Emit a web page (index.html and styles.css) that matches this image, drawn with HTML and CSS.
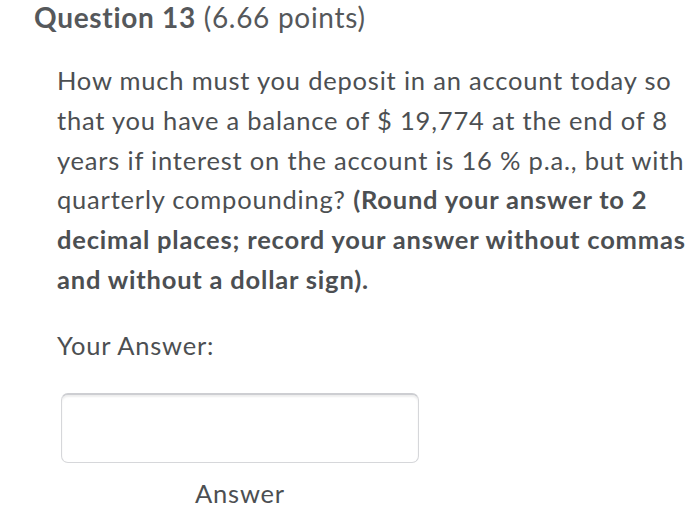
FILE: index.html
```html
<!DOCTYPE html>
<html>
<head>
<meta charset="utf-8">
<link rel="stylesheet" href="styles.css">
</head>
<body>
<div class="page">
  <h2 class="qtitle"><span class="qnum">Question 13</span> (6.66 points)</h2>
  <div class="qbody">
    <p class="prompt">How much must you deposit in an account today so<br>that you have a balance of $ 19,774 at the end of 8<br>years if interest on the account is 16 % p.a., but with<br>quarterly compounding? <strong>(Round your answer to 2<br>decimal places; record your answer without commas<br>and without a dollar sign).</strong></p>
    <div class="label">Your Answer:</div>
    <div class="field"><div class="inputbox"></div></div>
    <div class="caption">Answer</div>
  </div>
</div>
</body>
</html>
```
FILE: styles.css
```css
html, body { margin: 0; padding: 0; background: #fff; }
body { font-family: Lato, "Open Sans", sans-serif; color: #4c4f52; }
.page { padding: 0 0 0 34px; }
.qtitle { margin: 0; font-size: 28px; font-weight: 400; line-height: 35px; letter-spacing: 0.7px; color: #55585b; white-space: nowrap; }
.qnum { font-weight: 700; }
.qbody { padding-left: 23px; padding-top: 26px; }
.prompt { margin: 0; font-size: 25.5px; line-height: 39.8px; letter-spacing: 0.8px; white-space: nowrap; }
.prompt strong { font-weight: 700; }
.label { margin-top: 27px; font-size: 25.5px; line-height: 36px; letter-spacing: 0.8px; }
.field { padding: 30px 0 0 4px; }
.inputbox { box-sizing: border-box; width: 358px; height: 70px; border: 1px solid #d6d7da; border-top: 2px solid #cdced2; border-radius: 7px; box-shadow: inset 0 2px 2px rgba(0,0,0,0.07); }
.caption { width: 366px; text-align: center; margin-top: 13px; font-size: 25.5px; line-height: 34px; letter-spacing: 0.8px; }
```
